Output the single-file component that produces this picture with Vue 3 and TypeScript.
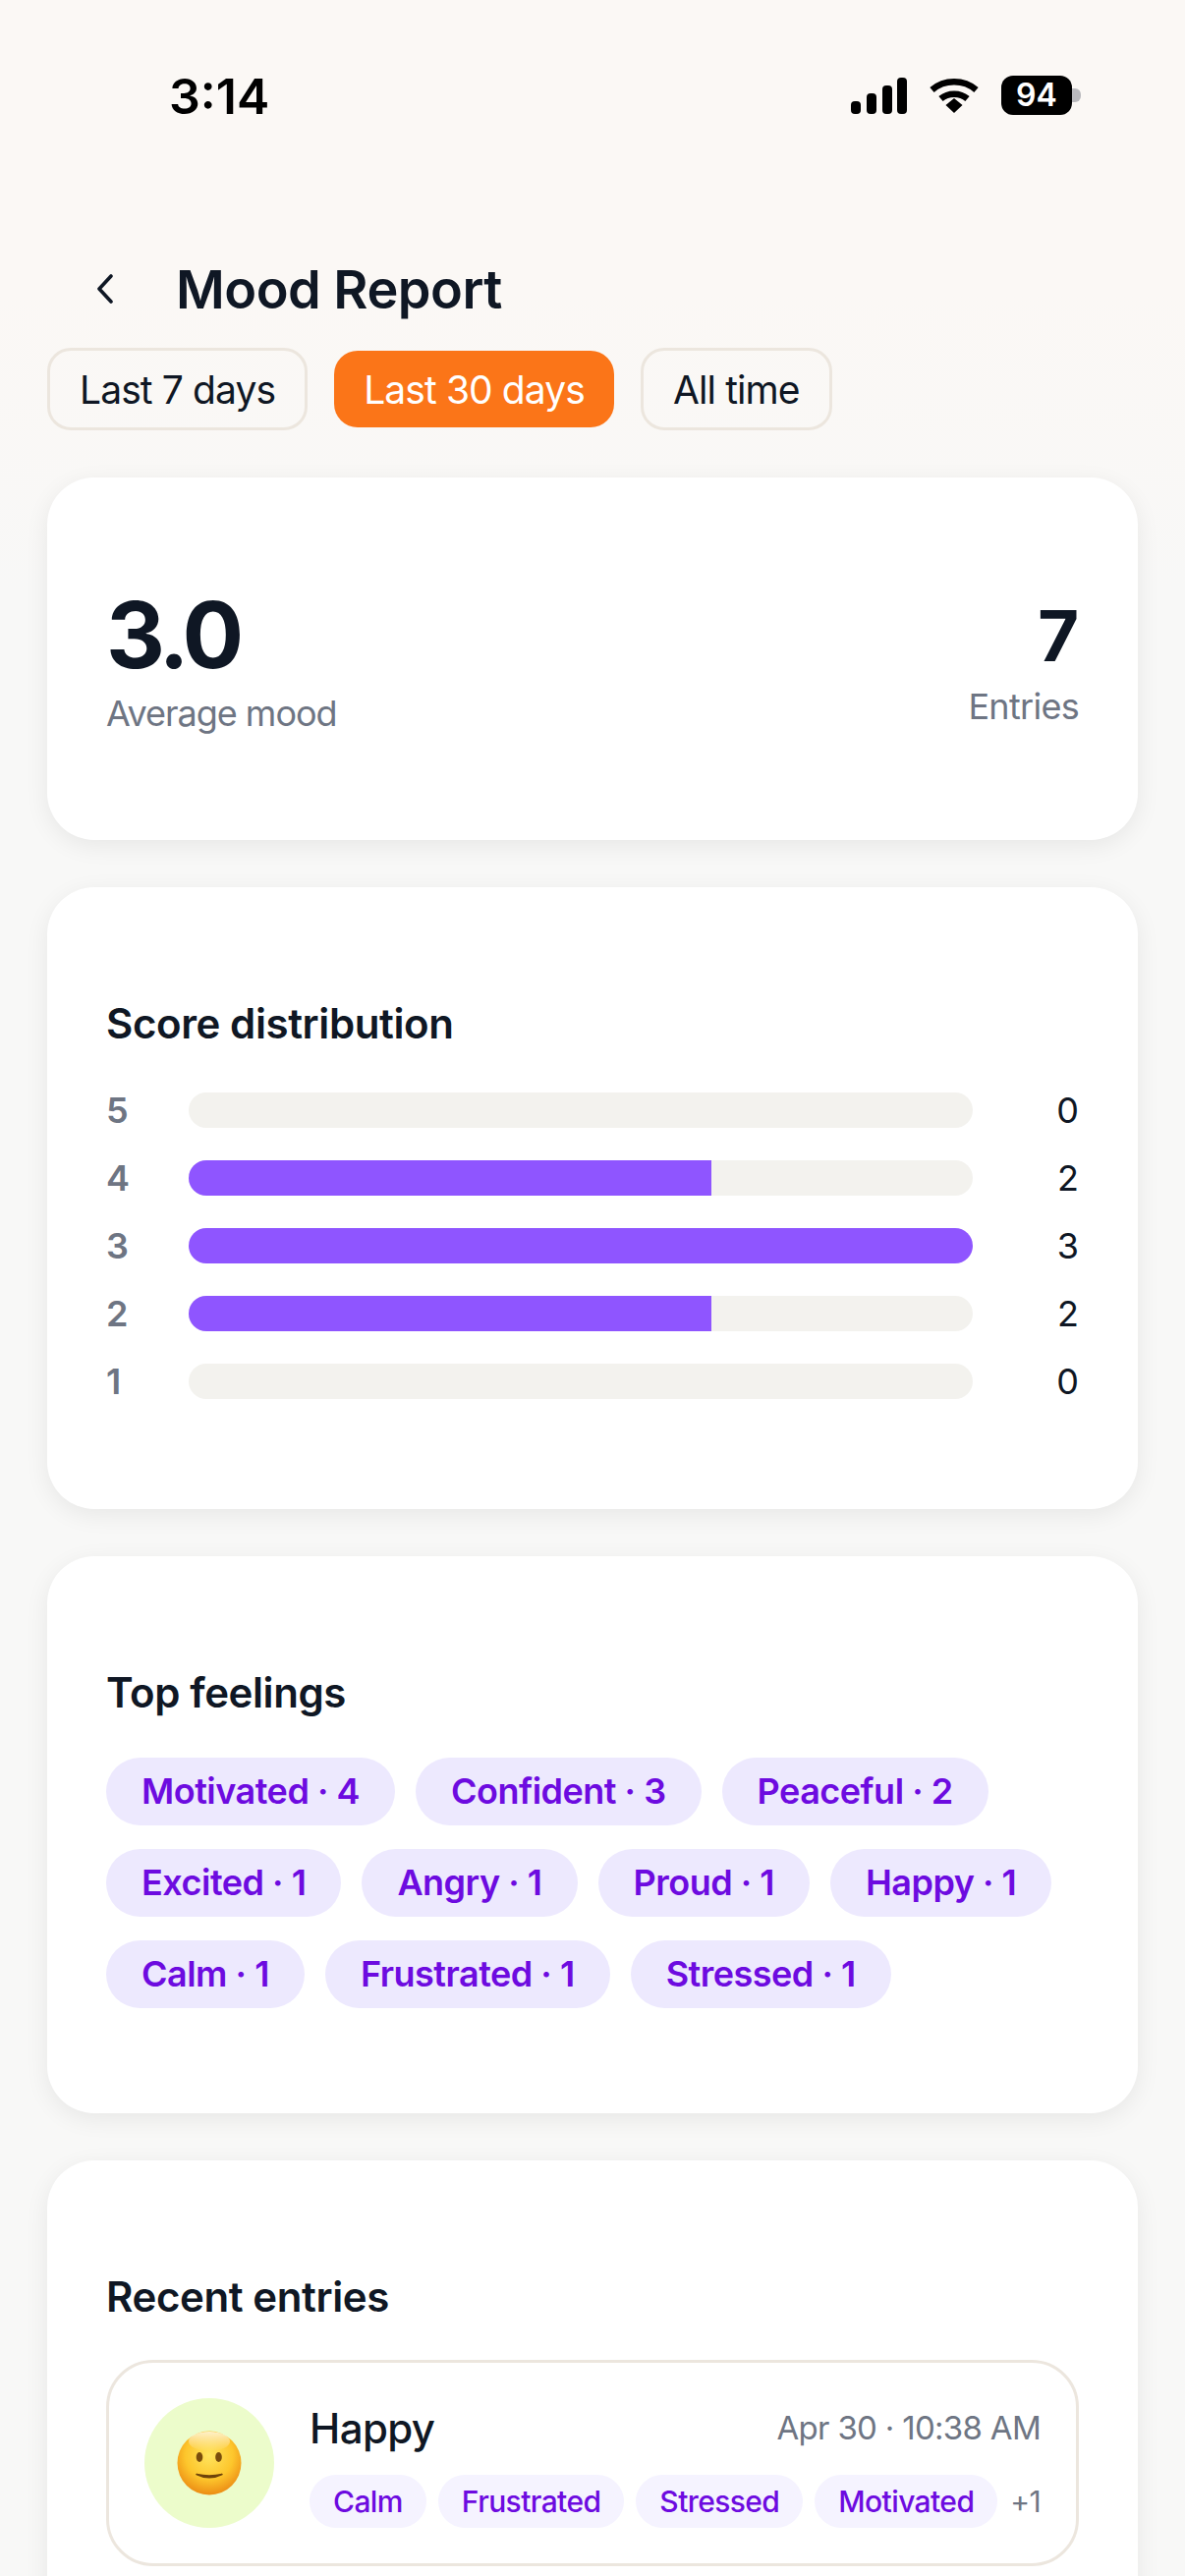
<script setup lang="ts">
const ranges = ["Last 7 days", "Last 30 days", "All time"];
const activeRange = "Last 30 days";

const distribution = [
  { score: 5, count: 0 },
  { score: 4, count: 2 },
  { score: 3, count: 3 },
  { score: 2, count: 2 },
  { score: 1, count: 0 },
];
const maxCount = 3;

const feelings = [
  { name: "Motivated", count: 4 },
  { name: "Confident", count: 3 },
  { name: "Peaceful", count: 2 },
  { name: "Excited", count: 1 },
  { name: "Angry", count: 1 },
  { name: "Proud", count: 1 },
  { name: "Happy", count: 1 },
  { name: "Calm", count: 1 },
  { name: "Frustrated", count: 1 },
  { name: "Stressed", count: 1 },
];

const entryTags = ["Calm", "Frustrated", "Stressed", "Motivated"];
</script>

<template>
  <div class="page">
    <header class="status">
      <span class="clock">3:14</span>
      <div class="status-icons">
        <svg width="57" height="37" viewBox="0 0 57 37" fill="#000">
          <rect x="0" y="24" width="10" height="13" rx="4" />
          <rect x="16" y="16" width="10" height="21" rx="4" />
          <rect x="32" y="8" width="10" height="29" rx="4" />
          <rect x="47" y="0" width="10" height="37" rx="4" />
        </svg>
        <svg width="50" height="36" viewBox="0 0 50 36" fill="none" stroke="#000" stroke-width="6.5">
          <path d="M2.5 12.5C15 1.5 35 1.5 47.5 12.5" />
          <path d="M11.5 21.5C19 15 31 15 38.5 21.5" />
          <path d="M16.5 28 L25 21 L33.5 28 L25 36 Z" fill="#000" stroke="none" />
        </svg>
        <div class="battery">
          <span class="battery-body">94</span>
          <span class="battery-cap"></span>
        </div>
      </div>
    </header>

    <div class="title-row">
      <svg class="back" width="24" height="30" viewBox="0 0 24 30" fill="none" stroke="#0f1724" stroke-width="3.6" stroke-linecap="round" stroke-linejoin="round">
        <path d="M17 2 L5 15 L17 28" />
      </svg>
      <h1>Mood Report</h1>
    </div>

    <div class="ranges">
      <button v-for="r in ranges" :key="r" class="range" :class="{ active: r === activeRange }">{{ r }}</button>
    </div>

    <section class="card summary">
      <div class="left">
        <div class="avg">3.0</div>
        <div class="muted">Average mood</div>
      </div>
      <div class="right">
        <div class="total">7</div>
        <div class="muted">Entries</div>
      </div>
    </section>

    <section class="card dist">
      <h2>Score distribution</h2>
      <div class="bars">
        <div v-for="d in distribution" :key="d.score" class="bar-row">
          <span class="score">{{ d.score }}</span>
          <div class="track">
            <div class="fill" :style="{ width: (d.count / maxCount) * 100 + '%' }"></div>
          </div>
          <span class="count">{{ d.count }}</span>
        </div>
      </div>
    </section>

    <section class="card feels">
      <h2>Top feelings</h2>
      <div class="chips">
        <span v-for="f in feelings" :key="f.name" class="chip">{{ f.name }} · {{ f.count }}</span>
      </div>
    </section>

    <section class="card recent">
      <h2>Recent entries</h2>
      <div class="entry">
        <div class="avatar">
          <svg width="66" height="66" viewBox="0 0 66 66">
            <defs>
              <radialGradient id="face" cx="50%" cy="38%" r="62%">
                <stop offset="0%" stop-color="#ffe45e" />
                <stop offset="60%" stop-color="#fdc62c" />
                <stop offset="100%" stop-color="#ec8c14" />
              </radialGradient>
              <linearGradient id="shine" x1="0" y1="0" x2="0" y2="1">
                <stop offset="0%" stop-color="#fff" stop-opacity="0.75" />
                <stop offset="100%" stop-color="#fff" stop-opacity="0" />
              </linearGradient>
            </defs>
            <circle cx="33" cy="33" r="32.5" fill="url(#face)" />
            <ellipse cx="33" cy="11" rx="21" ry="10" fill="url(#shine)" />
            <ellipse cx="23" cy="27" rx="3.3" ry="5" fill="#7a4d0c" />
            <ellipse cx="42.500" cy="27" rx="3.3" ry="5" fill="#7a4d0c" />
            <path d="M20 44.500 Q33 51 46 44.500 Q33 47.500 20 44.500 Z" fill="#6e430a" stroke="#6e430a" stroke-width="1.500" stroke-linejoin="round" />
          </svg>
        </div>
        <div class="entry-body">
          <div class="entry-top">
            <span class="entry-name">Happy</span>
            <span class="entry-date">Apr 30 · 10:38 AM</span>
          </div>
          <div class="entry-tags">
            <span v-for="t in entryTags" :key="t" class="tag">{{ t }}</span>
            <span class="more">+1</span>
          </div>
        </div>
      </div>
    </section>
  </div>
</template>

<style scoped>
.page {
  width: 1206px;
  height: 2622px;
  overflow: hidden;
  box-sizing: border-box;
  padding: 0 48px;
  background: linear-gradient(180deg, #fbf8f5 0, #fbf8f5 300px, #f8f8f7 600px);
  font-family: Inter, "Liberation Sans", sans-serif;
  color: #0f1724;
}
.status { height: 246px; display: flex; justify-content: space-between; align-items: flex-start; padding: 71px 58px 0 124px; box-sizing: border-box; }
.clock { font-size: 50px; font-weight: 600; line-height: 54px; color: #000; }
.status-icons { display: flex; align-items: center; gap: 23px; padding-top: 6px; }
.battery { display: flex; align-items: center; }
.battery-body { width: 72px; height: 40px; border-radius: 12px; background: #000; color: #fff; font-size: 32px; font-weight: 600; line-height: 40px; text-align: center; }
.battery-cap { width: 9px; height: 14px; background: #b9b9bd; border-radius: 0 6px 6px 0; }
.title-row { height: 96px; display: flex; align-items: center; gap: 59px; padding-left: 48px; }
.back { flex-shrink: 0; }
h1 { margin: 0; font-size: 54px; font-weight: 600; letter-spacing: -0.5px; }
.ranges { display: flex; align-items: center; gap: 27px; margin-top: 12px; margin-bottom: 48px; height: 84px; }
.range { font: inherit; font-size: 39px; letter-spacing: -0.9px; height: 84px; padding: 0 30px; background: transparent; border: 3px solid #ece6de; border-radius: 24px; color: #0f1724; }
.range.active { height: 78px; padding: 0 30px; border: 0; background: #fb7518; color: #fff; }
.card { background: #fff; border-radius: 48px; padding: 60px; padding-top: 112px; box-sizing: border-box; margin-bottom: 48px; box-shadow: 0 6px 24px rgba(20, 20, 20, 0.07); }
.summary { height: 369px; padding-top: 0; padding-bottom: 0; display: flex; justify-content: space-between; align-items: center; }
.left { margin-top: 4px; }
.avg { font-size: 93px; font-weight: 700; line-height: 100px; letter-spacing: -4.5px; margin-bottom: 6px; }
.total { font-size: 72px; font-weight: 700; line-height: 88px; margin-bottom: 4px; }
.muted { font-size: 36px; letter-spacing: -1px; color: #6e7583; line-height: 48px; }
.right { text-align: right; margin-top: 4px; }
.right .muted { letter-spacing: -0.7px; }
h2 { margin: 0; font-size: 42px; font-weight: 600; letter-spacing: -0.4px; line-height: 54px; }
.dist { height: 633px; }
.bars { display: flex; flex-direction: column; gap: 33px; margin-top: 43px; }
.bar-row { display: flex; align-items: center; height: 36px; }
.score { width: 84px; font-size: 36px; font-weight: 600; color: #6e7583; }
.track { flex: 1; height: 36px; background: #f3f2ee; border-radius: 18px; overflow: hidden; }
.fill { height: 100%; background: #8f55ff; }
.count { width: 108px; text-align: right; font-size: 36px; }
.feels { height: 567px; }
.chips { display: flex; flex-wrap: wrap; gap: 24px 21px; margin-top: 39px; }
.chip { height: 69px; line-height: 69px; padding: 0 36px; border-radius: 35px; background: #ede9fe; color: #6d0be0; font-size: 36px; letter-spacing: -0.5px; font-weight: 600; }
.recent { height: 600px; }
.entry { margin-top: 37px; height: 210px; border: 3px solid #ece6de; border-radius: 48px; display: flex; align-items: center; padding: 0 36px; gap: 36px; box-sizing: border-box; }
.avatar { width: 132px; height: 132px; border-radius: 50%; background: #ecfccb; display: flex; align-items: center; justify-content: center; flex-shrink: 0; }
.entry-body { flex: 1; min-width: 0; }
.entry-top { display: flex; justify-content: space-between; align-items: center; height: 60px; margin-bottom: 18px; }
.entry-name { font-size: 42px; font-weight: 500; letter-spacing: -0.6px; }
.entry-date { font-size: 33px; letter-spacing: -0.7px; color: #6e7583; }
.entry-tags { display: flex; align-items: center; gap: 12px; }
.tag { height: 54px; line-height: 54px; padding: 0 24px; border-radius: 27px; background: #f5f3ff; color: #6d0be0; font-size: 30px; letter-spacing: -0.6px; font-weight: 500; }
.more { font-size: 30px; letter-spacing: -0.7px; color: #6e7583; margin-left: auto; }
</style>

<style>
html, body { margin: 0; background: #f8f8f7; }
</style>
